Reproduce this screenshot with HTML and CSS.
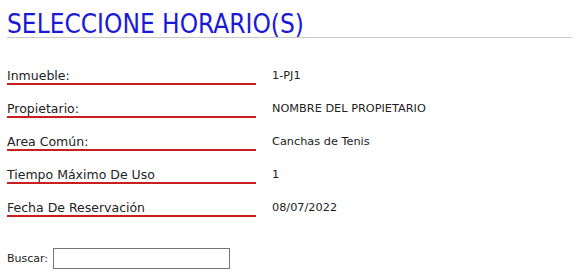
FILE: index.html
```html
<!DOCTYPE html>
<html lang="es">

<head>
    <meta charset="UTF-8">
    <title>Seleccione Horario(s)</title>
    <link rel="stylesheet" href="styles.css">
</head>

<body>
    <h1 class="titulo">SELECCIONE HORARIO(S)</h1>

    <div class="datos">
        <div class="fila">
            <div class="etiqueta">Inmueble:</div>
            <div class="valor">1-PJ1</div>
        </div>
        <div class="fila">
            <div class="etiqueta">Propietario:</div>
            <div class="valor">NOMBRE DEL PROPIETARIO</div>
        </div>
        <div class="fila">
            <div class="etiqueta">Area Común:</div>
            <div class="valor">Canchas de Tenis</div>
        </div>
        <div class="fila">
            <div class="etiqueta">Tiempo Máximo De Uso</div>
            <div class="valor">1</div>
        </div>
        <div class="fila">
            <div class="etiqueta">Fecha De Reservación</div>
            <div class="valor">08/07/2022</div>
        </div>
    </div>

    <div class="buscar">
        <label for="txtBuscar">Buscar:</label>
        <input type="text" id="txtBuscar">
    </div>
</body>

</html>
```

FILE: styles.css
```css
* {
    box-sizing: border-box;
}

body {
    margin: 0;
    padding: 0 5px 0 7px;
    font-family: "DejaVu Sans", Verdana, sans-serif;
    background-color: white;
    color: #222;
}

.titulo {
    margin: 0;
    padding-top: 10px;
    height: 38px;
    font-family: "DejaVu Sans Condensed", "DejaVu Sans", Tahoma, sans-serif;
    font-size: 26px;
    font-weight: normal;
    line-height: 29px;
    color: #1a1ad6;
    border-bottom: 1px solid #c8c8c8;
}

.datos {
    padding-top: 26px;
}

.fila {
    display: flex;
    align-items: flex-start;
    height: 33px;
}

.etiqueta {
    width: 249px;
    height: 21px;
    font-size: 12.5px;
    line-height: 19px;
    padding-top: 2px;
    border-bottom: 2px solid #c81e1e;
}

.valor {
    margin-left: 16px;
    font-size: 11.3px;
    line-height: 14px;
    padding-top: 5px;
}

.buscar {
    display: flex;
    align-items: center;
    gap: 5px;
    margin-top: 19px;
    font-size: 11px;
}

.buscar input {
    width: 177px;
    height: 21px;
    margin: 0;
    border: 1px solid #767676;
    padding: 1px 3px;
}
```
